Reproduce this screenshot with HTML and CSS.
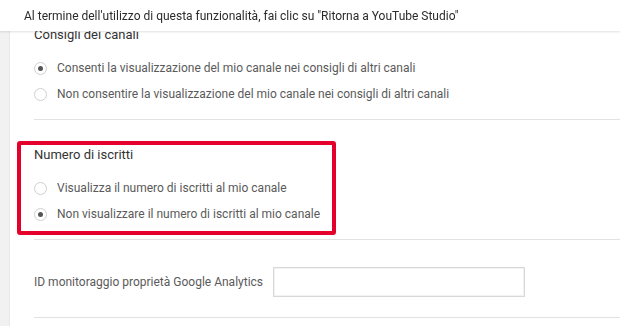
FILE: index.html
```html
<!DOCTYPE html>
<html lang="it">
  <head>
    <meta charset="UTF-8" />
    <meta name="viewport" content="width=device-width, initial-scale=1.0" />
    <title>Impostazioni canale</title>

    <link rel="stylesheet" href="styles.css">
  </head>
  <body>
    <div class="banner">
      Al termine dell'utilizzo di questa funzionalità, fai clic su "Ritorna a YouTube Studio"
    </div>

    <div class="page">
      <div class="card">
        <section class="block block-first">
          <h3 class="block-title">Consigli dei canali</h3>
          <label class="option">
            <span class="radio radio-on"></span>
            Consenti la visualizzazione del mio canale nei consigli di altri canali
          </label>
          <label class="option">
            <span class="radio"></span>
            Non consentire la visualizzazione del mio canale nei consigli di altri canali
          </label>
        </section>

        <section class="block block-marked">
          <div class="highlight"></div>
          <h3 class="block-title">Numero di iscritti</h3>
          <label class="option">
            <span class="radio"></span>
            Visualizza il numero di iscritti al mio canale
          </label>
          <label class="option">
            <span class="radio radio-on"></span>
            Non visualizzare il numero di iscritti al mio canale
          </label>
        </section>

        <section class="block block-field">
          <span class="field-label">ID monitoraggio proprietà Google Analytics</span>
          <input class="field-input" type="text" />
        </section>
      </div>
    </div>
  </body>
</html>
```

FILE: styles.css
```css
html,
body {
  margin: 0;
  height: 100%;
  overflow: hidden;
}

body {
  background: #f1f1f1;
  font-family: Roboto, "Noto Sans", sans-serif;
  color: #333;
}

/* strip on top, lies over the scrolled card */
.banner {
  position: fixed;
  top: 0;
  left: 0;
  right: 0;
  z-index: 2;
  height: 31px;
  padding-left: 24px;
  display: flex;
  align-items: center;
  background: #fff;
  font-size: 12px;
  color: #2b2b2b;
  box-shadow: 0 1px 2px rgba(0, 0, 0, 0.12);
}

.page {
  padding-left: 9px;
  height: 100%;
}

.card {
  background: #fff;
  height: 100%;
  padding-left: 24px;
  border-left: 1px solid #e8e8e8;
}

.block {
  position: relative;
  border-bottom: 1px solid #e2e2e2;
}

.block-first {
  padding-top: 27px;
  padding-bottom: 12px;
}

.block-marked {
  padding-top: 27px;
  padding-bottom: 12px;
}

.block-title {
  margin: 0 0 13px;
  font-size: 13px;
  font-weight: 400;
  color: #333;
}

.option {
  display: flex;
  align-items: center;
  gap: 10px;
  height: 26px;
  font-size: 12px;
  color: #5a5a5a;
}

.radio {
  width: 11px;
  height: 11px;
  margin-left: 0;
  border: 1px solid #cfcfcf;
  border-radius: 50%;
  display: flex;
  align-items: center;
  justify-content: center;
}

.radio-on::after {
  content: "";
  width: 5px;
  height: 5px;
  border-radius: 50%;
  background: #555;
}

/* red annotation frame drawn over the section */
.highlight {
  position: absolute;
  left: -17px;
  top: 21px;
  width: 311px;
  height: 86px;
  border: 4px solid #e4002b;
  border-radius: 3px;
}

.block-field {
  display: flex;
  align-items: center;
  gap: 10px;
  padding: 27px 0 20px;
}

.field-label {
  font-size: 12px;
  color: #5a5a5a;
}

.field-input {
  width: 250px;
  height: 28px;
  padding: 0;
  border: 1px solid #d8d8d8;
  box-shadow: inset 0 0 0 1px #f2f2f2;
  background: #fff;
}
```
